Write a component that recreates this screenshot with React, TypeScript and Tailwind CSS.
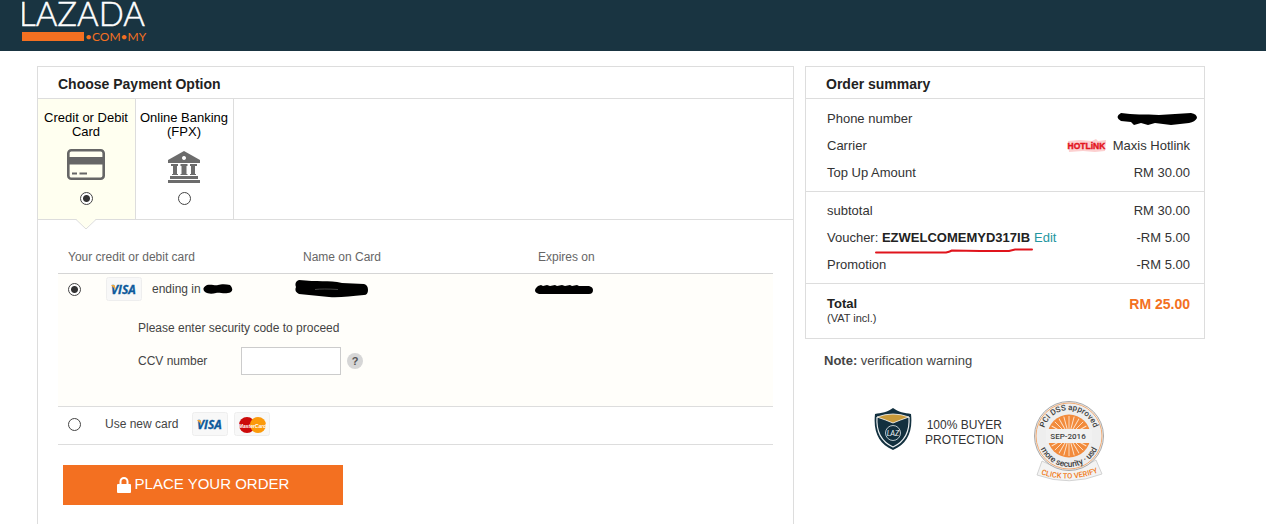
import type { ReactNode } from "react";

const radioClass =
  "m-0 block size-[13px] shrink-0 appearance-none rounded-full border border-[#444] bg-white checked:bg-[radial-gradient(circle,#333_0_3px,#fff_4px)]";

function LazadaLogo() {
  return (
    <svg width="128" height="44" viewBox="0 0 128 44" role="img" aria-label="Lazada.com.my">
      <text x="-3" y="26" fontFamily="Lato, sans-serif" fontWeight="300" fontSize="33" fill="#fff" stroke="#fff" strokeWidth=".5">
        LAZADA
      </text>
      <rect x="0" y="32" width="62" height="9" fill="#f37021" />
      <text x="63" y="41" fontFamily="Lato, sans-serif" fontSize="12" fill="#f37021">
        •COM•MY
      </text>
    </svg>
  );
}

function CardIcon() {
  return (
    <svg width="38" height="31" viewBox="0 0 38 31" aria-hidden="true">
      <rect x="1.300" y="1.300" width="35.400" height="28.400" rx="3" fill="none" stroke="#666" strokeWidth="2.600" />
      <rect x="1" y="8" width="36" height="7.500" fill="#666" />
      <path d="M5 24.500h5M12.500 24.500h7.500" stroke="#666" strokeWidth="2.200" />
    </svg>
  );
}

function BankIcon() {
  return (
    <svg width="32" height="32" viewBox="0 0 32 32" aria-hidden="true" fill="#6c6c6c">
      <path fillRule="evenodd" d="M16 0L32 9v3H0V9zM16 5a2 2 0 1 0 .01 0z" />
      <path d="M3 13h7v2H9v8h1v1H4v-1h1v-8H3zM12.500 13h7v2h-1v8h1v1h-7v-1h1v-8h-1zM22 13h7v2h-2v8h1v1h-6v-1h1v-8h-1zM2 25h28v3H2zM0 29h32v3H0z" />
    </svg>
  );
}

function VisaBadge() {
  return (
    <svg width="36" height="24" viewBox="0 0 36 24" role="img" aria-label="Visa" className="shrink-0">
      <rect x=".5" y=".5" width="35" height="23" rx="2" fill="#f8f8f8" stroke="#eee" />
      <text x="5" y="17" fontFamily="Open Sans, sans-serif" fontStyle="italic" fontWeight="700" fontSize="12" fill="#0d5a9c" stroke="#0d5a9c" strokeWidth=".3">
        VISA
      </text>
      <path d="M5 8h3.500l1.500 5z" fill="#f2a93b" />
    </svg>
  );
}

function MasterCardBadge() {
  return (
    <svg width="36" height="24" viewBox="0 0 36 24" role="img" aria-label="MasterCard" className="shrink-0">
      <rect x=".5" y=".5" width="35" height="23" rx="2" fill="#f8f8f8" stroke="#eee" />
      <circle cx="13" cy="13" r="8" fill="#cc0a0a" />
      <circle cx="24" cy="13" r="8" fill="#fb9a0b" />
      <text x="18.500" y="15.500" textAnchor="middle" fontFamily="Liberation Sans, sans-serif" fontStyle="italic" fontWeight="700" fontSize="5" fill="#fff">
        MasterCard
      </text>
    </svg>
  );
}

function HotlinkLogo() {
  return (
    <svg width="40" height="14" viewBox="0 0 40 14" role="img" aria-label="Hotlink">
      <path d="M1 2l12-1 12 1 4-2 2 2 8-1-1 11-10 1-12-1-14 1z" fill="#fcd0d0" />
      <text x="19.500" y="10" textAnchor="middle" fontFamily="Liberation Sans, sans-serif" fontWeight="700" fontSize="8.500" fill="#e3141e" stroke="#e3141e" strokeWidth=".4">
        HOTLiNK
      </text>
    </svg>
  );
}

function ShieldIcon() {
  return (
    <svg width="38" height="42" viewBox="0 0 38 42" aria-hidden="true">
      <path d="M19 0C14 4 7 5 1 6C-1 24 5 36 19 42C33 36 39 24 37 6C31 5 24 4 19 0z" fill="#12303f" />
      <path d="M3 9C2 24 8 34 19 39C30 34 36 24 35 9" fill="none" stroke="#e9eef0" strokeWidth="1.200" />
      <path d="M3 9Q19 3 35 9Q26 12 19 15Q12 12 3 9z" fill="#c89a3a" stroke="#fff" strokeWidth=".8" />
      <circle cx="19" cy="25" r="7.500" fill="none" stroke="#b9c6cc" />
      <text x="19" y="28" textAnchor="middle" fontFamily="Lato, sans-serif" fontStyle="italic" fontSize="7.500" fill="#e9eef0">
        LAZ
      </text>
    </svg>
  );
}

const rays = Array.from({ length: 24 }, (_, i) => i * 15);

function PciSeal() {
  return (
    <svg width="72" height="82" viewBox="0 0 72 82" role="img" aria-label="PCI DSS approved">
      <defs>
        <path id="seal-top" d="M10 36a26 26 0 0 1 52 0" />
        <path id="seal-bottom" d="M4 36a32 32 0 0 0 64 0" />
        <path id="seal-ribbon" d="M2 72Q36 86 71 70" />
      </defs>
      <path d="M9 61L4 75Q36 87 69 74L63 60Q36 76 9 61z" fill="#f3f3f3" stroke="#c9c9c9" strokeWidth=".8" />
      <circle cx="36" cy="36" r="34.500" fill="#eeeeee" stroke="#a9a9a9" />
      <circle cx="36" cy="36" r="33" fill="none" stroke="#f29a55" strokeWidth=".8" />
      <circle cx="36" cy="36" r="21.500" fill="#f28b3c" />
      {rays.map((angle) => (
        <path key={angle} d="M36 36L36 16" stroke="#fde3cc" strokeWidth=".9" transform={`rotate(${angle} 36 36)`} />
      ))}
      <rect x="13" y="29" width="46" height="14" fill="#f1f1f1" />
      <g fontFamily="Roboto, sans-serif" fill="#3f3f3f" textAnchor="middle">
        <text x="35" y="38.500" fontSize="8" fontWeight="500">SEP-2016</text>
        <text fontSize="8" fontWeight="500">
          <textPath href="#seal-top" startOffset="50%">PCI DSS approved</textPath>
        </text>
        <text fontSize="8.500" fontWeight="500" dy="-1">
          <textPath href="#seal-bottom" startOffset="50%">more security  ·  usd</textPath>
        </text>
        <text fontSize="7.500" fill="#f07c22" fontWeight="500">
          <textPath href="#seal-ribbon" startOffset="50%">CLICK TO VERIFY</textPath>
        </text>
      </g>
    </svg>
  );
}

function Scribble({ width, height, d, children }: { width: number; height: number; d: string; children?: ReactNode }) {
  return (
    <svg width={width} height={height} viewBox={`0 0 ${width} ${height}`} aria-hidden="true" className="shrink-0">
      <path d={d} />
      {children}
    </svg>
  );
}

function SummaryRow({ label, children }: { label: ReactNode; children: ReactNode }) {
  return (
    <div className="flex h-[26px] items-center justify-between">
      <dt>{label}</dt>
      <dd className="flex items-center gap-1.5">{children}</dd>
    </div>
  );
}

function PaymentPanel() {
  return (
    <section className="flex-1 border border-b-0 border-[#ddd]">
      <h2 className="flex h-8 items-center border-b border-[#ddd] px-5 pt-1 text-[14px] font-bold text-[#222]">
        Choose Payment Option
      </h2>
      <div className="flex h-[121px] border-b border-[#ddd] text-center text-[13px] leading-[14px] text-black">
        <label className="relative flex w-[98px] flex-col items-center border-r border-[#ddd] bg-[#fffff0] pt-3 pr-px">
          Credit or Debit Card
          <span className="mt-[9px] flex h-8 items-center"><CardIcon /></span>
          <input type="radio" name="method" defaultChecked className={`${radioClass} mt-3`} />
          <svg width="20" height="11" viewBox="0 0 20 11" aria-hidden="true" className="absolute top-full left-[38px]">
            <path d="M0 0L10 10L20 0z" fill="#fffff0" />
            <path d="M0 .5L10 10L20 .5" fill="none" stroke="#ddd" />
          </svg>
        </label>
        <label className="flex w-[98px] flex-col items-center border-r border-[#ddd] pt-3 pr-px">
          Online Banking (FPX)
          <span className="mt-3 flex h-8 items-center"><BankIcon /></span>
          <input type="radio" name="method" className={`${radioClass} mt-[9px]`} />
        </label>
      </div>

      <div className="px-5 pt-[21px]">
        <table className="w-full table-fixed border-collapse text-left text-[12px] text-[#444]">
          <colgroup>
            <col className="w-[235px]" />
            <col className="w-[235px]" />
            <col />
          </colgroup>
          <thead>
            <tr className="h-8 border-b border-[#d5d5d5] text-[#666]">
              <th className="px-2.5 font-normal">Your credit or debit card</th>
              <th className="px-2.5 font-normal">Name on Card</th>
              <th className="px-2.5 font-normal">Expires on</th>
            </tr>
          </thead>
          <tbody>
            <tr className="h-8 bg-[#fffefa]">
              <td className="p-0 pl-2.5">
                <label className="flex items-center">
                  <input type="radio" name="card" defaultChecked className={radioClass} />
                  <span className="ml-[25px]"><VisaBadge /></span>
                  <span className="mr-0.5 ml-2.5">ending in</span>
                  <Scribble width={30} height={10} d="M4 1C9 0 12 2 15 1S23 0 27 1Q31 5 28 8C22 11 17 8 13 9S5 10 2 8Q-2 4 4 1z" />
                </label>
              </td>
              <td className="p-0 pl-0.5">
                <Scribble width={73} height={18} d="M4 0C22 2 34 0 47 3L69 4Q73 5 73 10Q73 15 69 15C55 16 44 18 34 17L4 14Q-1 12 1 7Q-1 2 4 0z">
                  <path d="M20 9.500Q28 8.500 43 9.500" fill="none" stroke="#555" strokeWidth=".8" />
                </Scribble>
              </td>
              <td className="p-0 pl-[7px]">
                <Scribble width={58} height={9} d="M3 1L6 0L8 1L12 0L15 1L20 0L22 1L27 0L30 1L35 0L37 1L42 0L44 1L54 1Q58 2 58 5Q58 9 54 9L4 9Q-2 7 1 3z" />
              </td>
            </tr>
            <tr className="h-[101px] border-b border-[#ddd] bg-[#fffefa]">
              <td colSpan={3} className="pt-3.5 pl-20 align-top">
                <p>Please enter security code to proceed</p>
                <div className="mt-2.5 flex items-center">
                  <label htmlFor="ccv" className="w-[103px]">CCV number</label>
                  <input id="ccv" type="text" className="h-7 w-[100px] border border-[#ccc] bg-white px-2" />
                  <button type="button" aria-label="What is the CCV number" className="ml-1.5 size-4 rounded-full bg-[#d6d6d6] text-[11px] leading-4 font-bold text-[#555]">
                    ?
                  </button>
                </div>
              </td>
            </tr>
            <tr className="h-[38px] border-b border-[#ddd]">
              <td colSpan={3} className="p-0 pb-0.5 pl-2.5">
                <label className="flex items-center">
                  <input type="radio" name="card" className={radioClass} />
                  <span className="mr-3.5 ml-6">Use new card</span>
                  <VisaBadge />
                  <span className="ml-1.5"><MasterCardBadge /></span>
                </label>
              </td>
            </tr>
          </tbody>
        </table>
        <button type="button" className="mt-5 ml-[5px] flex h-10 w-[280px] items-center justify-center gap-1 bg-[#f37021] text-[15px] text-white">
          <svg width="14" height="16" viewBox="0 0 14 16" aria-hidden="true">
            <path d="M3.500 8V4.500a3.500 3.500 0 0 1 7 0V8" fill="none" stroke="#fff" strokeWidth="2" />
            <rect x="0" y="7" width="14" height="9" rx="1" fill="#fff" />
          </svg>
          PLACE YOUR ORDER
        </button>
      </div>
    </section>
  );
}

function OrderSummary() {
  return (
    <aside className="w-[400px] shrink-0">
      <section className="border border-[#ddd] text-[13px] text-[#333]">
        <h2 className="flex h-8 items-center border-b border-[#ddd] px-5 pt-1 text-[14px] font-bold text-[#222]">
          Order summary
        </h2>
        <dl className="flex flex-col gap-px border-b border-[#ddd] pt-[7px] pr-3.5 pb-[5px] pl-[21px]">
          <SummaryRow label="Phone number">
            <span className="-mr-[7px]">
              <Scribble width={80} height={13} d="M4 0C16 2 28 1 42 2L74 0Q80 1 80 5Q78 9 72 10L54 12L38 10L31 12L24 10L17 12L14 9L4 8Q-3 4 4 0z" />
            </span>
          </SummaryRow>
          <SummaryRow label="Carrier">
            <HotlinkLogo />
            Maxis Hotlink
          </SummaryRow>
          <SummaryRow label="Top Up Amount">RM 30.00</SummaryRow>
        </dl>
        <dl className="flex flex-col gap-px border-b border-[#ddd] pt-1.5 pr-3.5 pb-[5px] pl-[21px]">
          <SummaryRow label="subtotal">RM 30.00</SummaryRow>
          <SummaryRow
            label={
              <>
                Voucher:{" "}
                <span className="relative inline-block">
                  <strong className="text-[#222]">EZWELCOMEMYD317IB</strong>
                  <svg width="158" height="6" viewBox="0 0 158 6" aria-hidden="true" className="absolute top-full -left-[7px]">
                    <path d="M1 4.500H71Q74 4 77 2.500Q105 3 134 3L140 1.500H157" fill="none" stroke="#e0141c" strokeWidth="2" strokeLinecap="round" />
                  </svg>
                </span>
                <a href="#voucher" className="ml-1 text-[#2496a0]">Edit</a>
              </>
            }
          >
            -RM 5.00
          </SummaryRow>
          <SummaryRow label="Promotion">-RM 5.00</SummaryRow>
        </dl>
        <div className="flex h-[54px] justify-between pt-3 pr-3.5 pl-[21px] leading-4">
          <div>
            <p className="font-bold text-[#222]">Total</p>
            <p className="text-[11px] leading-3">(VAT incl.)</p>
          </div>
          <p className="text-[14px] font-bold text-[#f37021]">RM 25.00</p>
        </div>
      </section>
      <p className="mt-3 px-[19px] text-[13px] leading-5 text-[#444]">
        <strong>Note:</strong> verification warning
      </p>
      <div className="mt-7 flex items-start pt-px pl-[69px]">
        <span className="pt-2"><ShieldIcon /></span>
        <p className="mr-[29px] ml-[13px] pt-[18px] text-center text-[12px] leading-[15px] text-[#333]">
          100% BUYER
          <br />
          PROTECTION
        </p>
        <PciSeal />
      </div>
    </aside>
  );
}

export default function App() {
  return (
    <div className="flex min-h-screen flex-col bg-white font-['Liberation_Sans',Arial,sans-serif]">
      <header className="h-[51px] bg-[#193441] pl-[22px]">
        <LazadaLogo />
      </header>
      <main className="flex flex-1 gap-[11px] pt-[15px] pr-[61px] pl-[37px]">
        <PaymentPanel />
        <OrderSummary />
      </main>
    </div>
  );
}
